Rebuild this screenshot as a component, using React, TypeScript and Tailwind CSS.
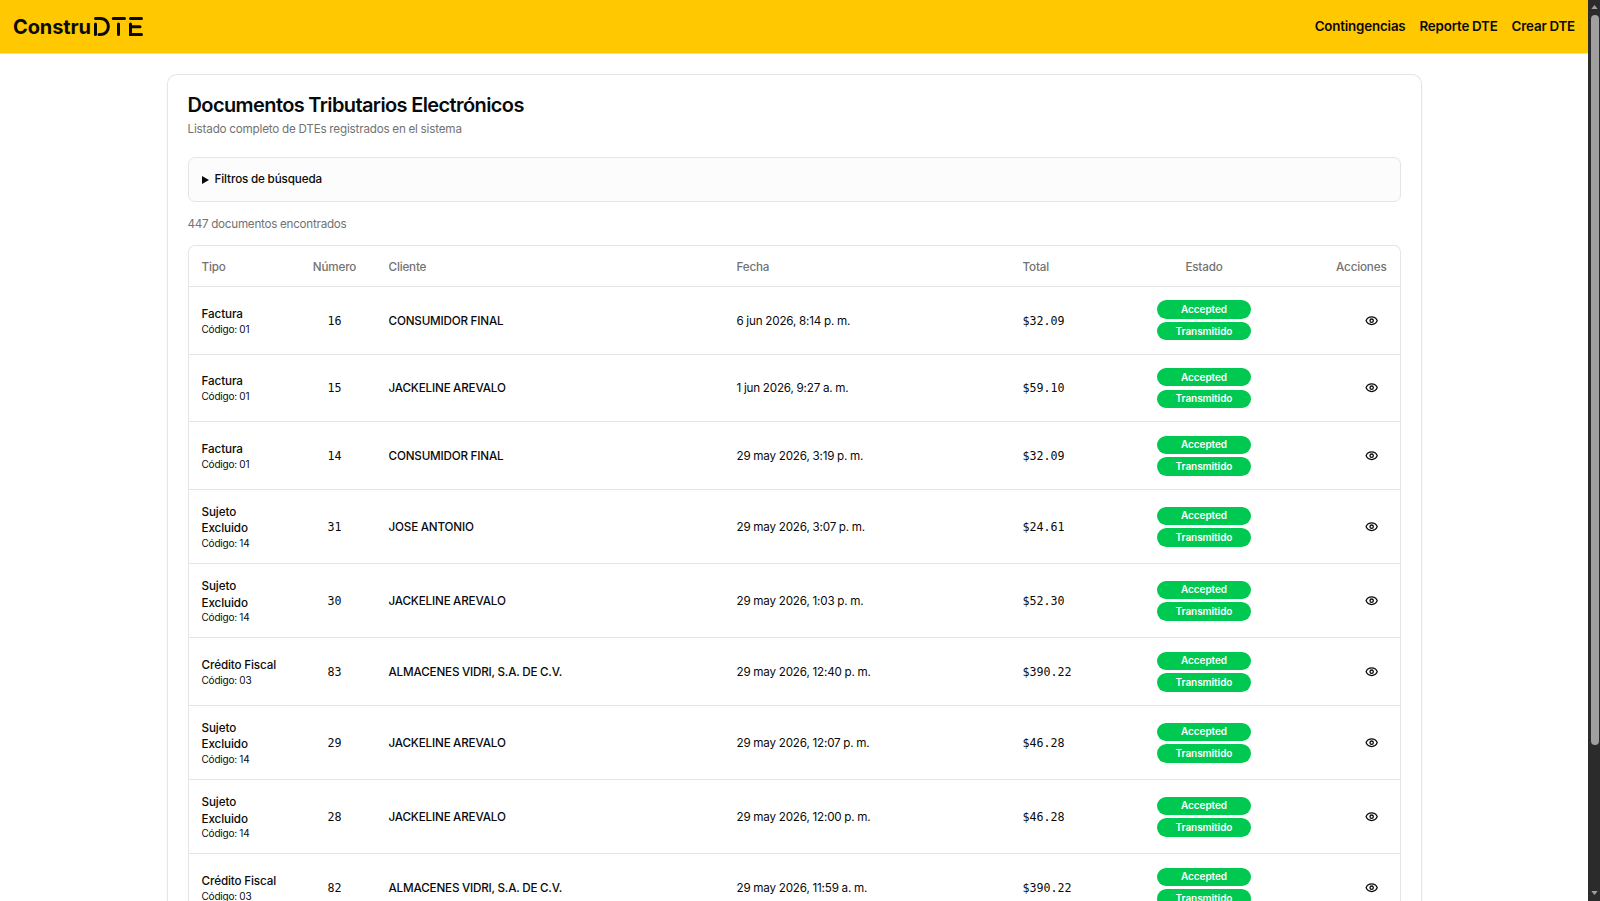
import { Eye } from "lucide-react";

type Doc = {
  type: string;
  code: string;
  number: number;
  client: string;
  date: string;
  total: string;
};

const docs: Doc[] = [
  { type: "Factura", code: "01", number: 16, client: "CONSUMIDOR FINAL", date: "6 jun 2026, 8:14 p. m.", total: "$32.09" },
  { type: "Factura", code: "01", number: 15, client: "JACKELINE AREVALO", date: "1 jun 2026, 9:27 a. m.", total: "$59.10" },
  { type: "Factura", code: "01", number: 14, client: "CONSUMIDOR FINAL", date: "29 may 2026, 3:19 p. m.", total: "$32.09" },
  { type: "Sujeto Excluido", code: "14", number: 31, client: "JOSE ANTONIO", date: "29 may 2026, 3:07 p. m.", total: "$24.61" },
  { type: "Sujeto Excluido", code: "14", number: 30, client: "JACKELINE AREVALO", date: "29 may 2026, 1:03 p. m.", total: "$52.30" },
  { type: "Crédito Fiscal", code: "03", number: 83, client: "ALMACENES VIDRI, S.A. DE C.V.", date: "29 may 2026, 12:40 p. m.", total: "$390.22" },
  { type: "Sujeto Excluido", code: "14", number: 29, client: "JACKELINE AREVALO", date: "29 may 2026, 12:07 p. m.", total: "$46.28" },
  { type: "Sujeto Excluido", code: "14", number: 28, client: "JACKELINE AREVALO", date: "29 may 2026, 12:00 p. m.", total: "$46.28" },
  { type: "Crédito Fiscal", code: "03", number: 82, client: "ALMACENES VIDRI, S.A. DE C.V.", date: "29 may 2026, 11:59 a. m.", total: "$390.22" },
];

const columns =
  "grid grid-cols-[105px_56px_1fr_286px_91px_181px_92px] items-center";

export default function App() {
  return (
    <div className="flex h-[901px] overflow-hidden bg-white font-['Inter',sans-serif] tracking-[-0.17px] text-neutral-950 [word-spacing:-0.3px]">
      <div className="flex min-w-0 flex-1 flex-col">
        <Header />
        <main className="mx-auto mt-5 w-[1255px] shrink-0 rounded-t-[10px] border border-b-0 border-neutral-200 px-5 pt-4 shadow-xs">
          <h1 className="text-[20px] leading-7 font-semibold tracking-[-0.6px]">
            Documentos Tributarios Electrónicos
          </h1>
          <p className="text-[11.67px] leading-5 text-neutral-500">
            Listado completo de DTEs registrados en el sistema
          </p>
          <div className="mt-[18px] flex h-[45px] items-center gap-[6px] rounded-[7px] border border-neutral-200 bg-[#fcfcfc] px-[13px]">
            <svg viewBox="0 0 7 8" className="h-2 w-[7px]" fill="currentColor">
              <path d="M0 0 7 4 0 8Z" />
            </svg>
            <span className="pt-px text-[11.67px] font-medium tracking-[-0.1px]">Filtros de búsqueda</span>
          </div>
          <p className="mt-3 text-[11.67px] leading-5 tracking-[-0.24px] text-neutral-500">
            447 documentos encontrados
          </p>
          <DocsTable />
        </main>
      </div>
      <Scrollbar />
    </div>
  );
}

function Header() {
  return (
    <header className="flex h-[54px] shrink-0 items-center justify-between border-b border-[#ffe588] bg-[#ffc800] pr-[13px] pl-[13px]">
      <div className="flex items-center gap-[2px]">
        <span className="text-[20px] font-bold tracking-[-0.1px]">Constru</span>
        <svg
          viewBox="0 0 51 21"
          className="h-[21px] w-[51px]"
          fill="none"
          stroke="currentColor"
          strokeWidth="3"
          strokeLinecap="round"
        >
          <path d="M2.500 8V18.500M2.500 2.500H7.500C18 2.500 18 18.500 7.500 18.500H6" />
          <path d="M20.200 2.500H31.500M25.500 8V18.500" />
          <path d="M37.500 2.500H48.500M37.500 8V18.500H48.500M37.500 10.700H47" />
        </svg>
      </div>
      <nav className="flex gap-[14px] text-[13.33px] font-semibold">
        <a>Contingencias</a>
        <a>Reporte DTE</a>
        <a>Crear DTE</a>
      </nav>
    </header>
  );
}

function DocsTable() {
  return (
    <section className="mt-[11px] rounded-t-[7px] border border-b-0 border-neutral-200 text-[11.67px]">
      <div className={`${columns} h-[41px] border-b border-neutral-200 px-[13px] pt-[3px] font-medium text-neutral-500`}>
        <span>Tipo</span>
        <span className="text-center">Número</span>
        <span className="pl-[26px]">Cliente</span>
        <span>Fecha</span>
        <span>Total</span>
        <span className="text-center">Estado</span>
        <span className="text-right">Acciones</span>
      </div>
      {docs.map((doc) => (
        <DocRow key={doc.number} doc={doc} />
      ))}
    </section>
  );
}

function DocRow({ doc }: { doc: Doc }) {
  const tall = doc.type.startsWith("Sujeto");

  return (
    <div className={`${columns} ${tall ? "h-[74.17px]" : "h-[67.67px]"} border-b border-neutral-200 px-[13px]`}>
      <div className="pt-px">
        <p className={`${tall ? "w-[60px]" : ""} leading-[16.67px] font-medium tracking-[-0.1px]`}>{doc.type}</p>
        <p className="text-[10px] leading-[13.33px] tracking-[-0.2px]">Código: {doc.code}</p>
      </div>
      <span className="pt-[2px] text-center font-['DejaVu_Sans_Mono',monospace] tracking-normal">{doc.number}</span>
      <span className="pt-[2px] pl-[26px] font-medium">{doc.client}</span>
      <span className="pt-[2px]">{doc.date}</span>
      <span className="pt-[2px] font-['DejaVu_Sans_Mono',monospace] tracking-normal">{doc.total}</span>
      <div className="flex flex-col items-center gap-[3.33px]">
        <Badge>Accepted</Badge>
        <Badge>Transmitido</Badge>
      </div>
      <div className="flex justify-end pr-[8px]">
        <Eye className="h-[13.33px] w-[13.33px]" strokeWidth={2.3} />
      </div>
    </div>
  );
}

function Badge({ children }: { children: string }) {
  return (
    <span className="flex h-[18.33px] w-[94px] items-center justify-center rounded-full bg-[#00c951] text-[10px] font-semibold tracking-[-0.05px] text-white">
      {children}
    </span>
  );
}

function Scrollbar() {
  return (
    <div className="flex w-3 shrink-0 flex-col items-center bg-[#2b2b2b] pl-px text-[#9f9f9f]">
      <svg viewBox="0 0 8 5" className="mt-[5px] h-[4px] w-[7px]" fill="currentColor">
        <path d="M4 0 8 5H0Z" />
      </svg>
      <div className="mt-[6px] h-[730px] w-2 rounded-full bg-[#9f9f9f]" />
      <svg viewBox="0 0 8 5" className="mt-auto mb-[6px] h-[4px] w-[7px]" fill="currentColor">
        <path d="M4 5 8 0H0Z" />
      </svg>
    </div>
  );
}
